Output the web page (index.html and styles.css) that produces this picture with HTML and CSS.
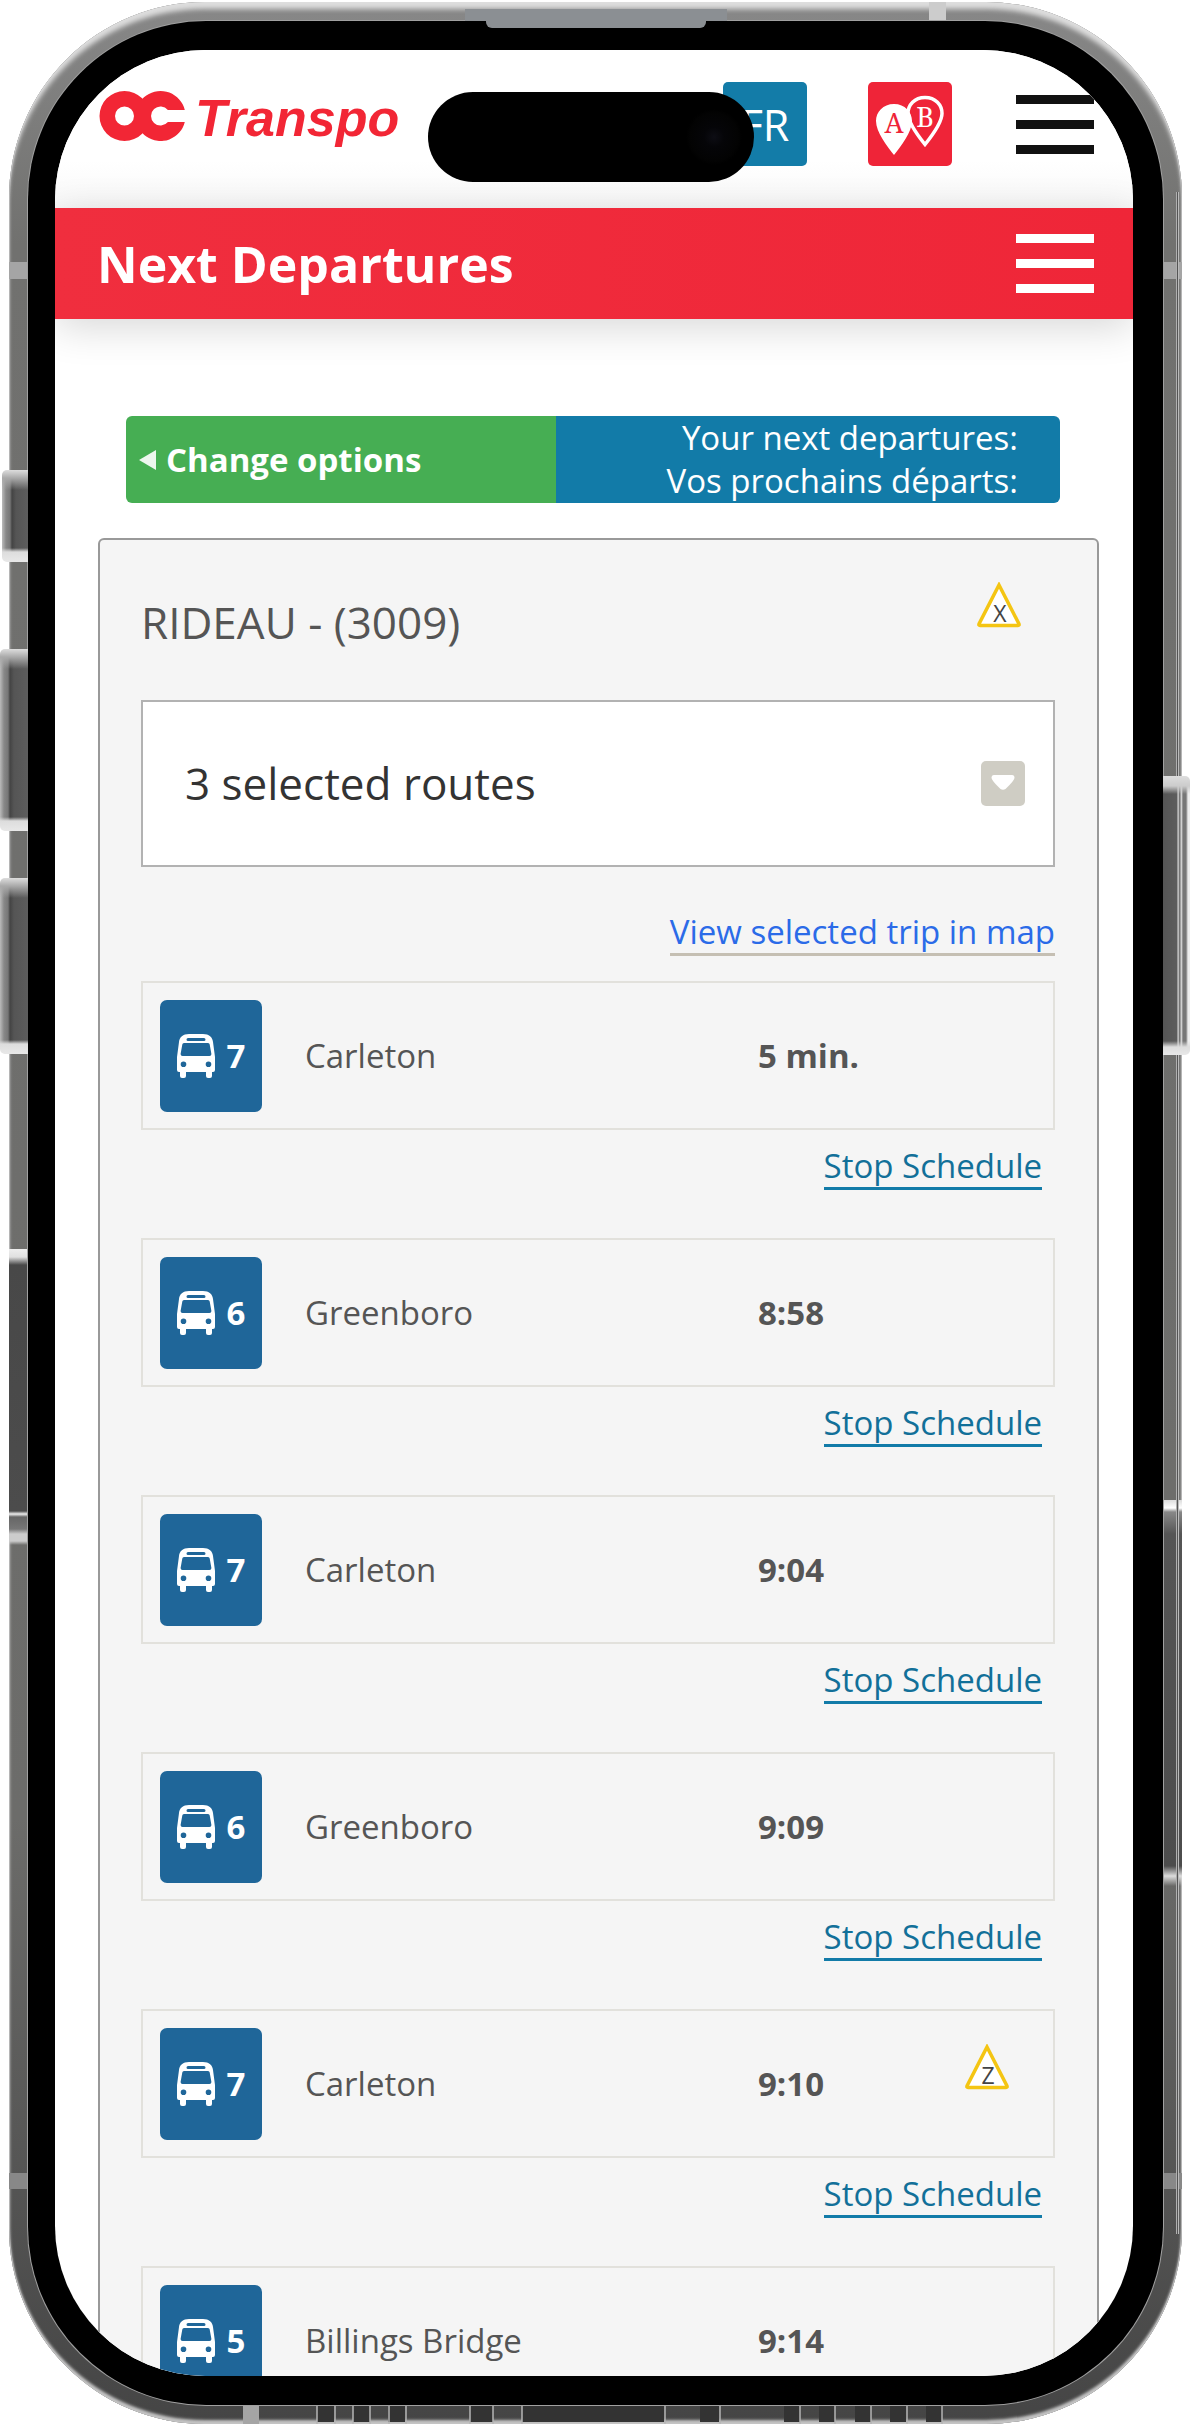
FILE: index.html
```html
<!DOCTYPE html>
<html lang="en">
<head>
<meta charset="utf-8">
<meta name="viewport" content="width=device-width, initial-scale=1">
<title>OC Transpo - Next Departures</title>
<link rel="stylesheet" href="styles.css">
</head>
<body>
<svg class="sprite" aria-hidden="true">
  <symbol id="bus" viewBox="0 0 38 44">
    <path fill="currentColor" fill-rule="evenodd" d="M12 0H26C32 0 35.500 3 36 8L38 23V36Q38 38 36 38H35V42Q35 44 33 44H31Q29 44 29 42V38H9V42Q9 44 7 44H5Q3 44 3 42V38H2Q0 38 0 36V23L2 8C2.500 3 6 0 12 0ZM11 4Q9.500 4 9.500 5.500T11 7H27Q28.500 7 28.500 5.500T27 4ZM7 9Q5.500 9 5.300 10.500L3.600 20Q3.500 22 5.500 22H32.500Q34.500 22 34.400 20L32.700 10.500Q32.500 9 31 9ZM6.500 27.500A2.800 2.800 0 1 0 6.500 33.100A2.800 2.800 0 1 0 6.500 27.500ZM31.500 27.500A2.800 2.800 0 1 0 31.500 33.100A2.800 2.800 0 1 0 31.500 27.500Z"/>
  </symbol>
</svg>
<div class="phone">
  <span class="key key-mute"></span>
  <span class="key key-up"></span>
  <span class="key key-down"></span>
  <span class="key key-power"></span>
  <div class="frame">
    <span class="reflection reflection-left"></span>
    <span class="reflection reflection-right"></span>
    <span class="antenna antenna-side"></span>
    <span class="antenna antenna-low"></span>
    <span class="antenna antenna-top"></span>
    <span class="antenna antenna-bottom"></span>
    <svg class="ports" viewBox="0 0 640 19" aria-hidden="true">
      <g fill="#333">
        <path d="M8 0h17v17H8zM44 0h17v17H44zM79 0h17v17H79zM161 0h23v17h-23zM213 0h142v17H213zM391 0h19v17h-19zM475 0h16v17h-16zM510 0h16v17h-16zM546 0h16v17h-16zM581 0h16v17h-16zM617 0h16v17h-16z"/>
      </g>
      <g stroke="#b5b5b5" stroke-width="1.500">
        <path d="M8 0v19M26 0v19M44 0v19M61 0v19M80 0v19M97 0v19M161 0v19M184 0v19M213 0v19M356 0v19M411 0v19M491 0v19M526 0v19M562 0v19M598 0v19M633 0v19"/>
      </g>
    </svg>
    <div class="bezel">
      <span class="speaker"></span>
      <div class="screen">
        <span class="island"></span>
        <header class="topbar">
          <a class="logo" href="#" aria-label="OC Transpo">
            <svg width="86" height="52" viewBox="0 0 86 52" aria-hidden="true">
              <g fill="#f22635" fill-rule="evenodd">
                <path d="M25.500 1A25 25 0 1 0 25.500 51A25 25 0 1 0 25.500 1ZM25.500 16.500A9.500 9.500 0 1 1 25.500 35.500A9.500 9.500 0 1 1 25.500 16.500Z"/>
                <path d="M85.800 20A25 25 0 1 0 85.800 32H68.900A9.500 9.500 0 1 1 68.900 20Z"/>
                <path d="M38 6L43.500 10L49 6V46L43.500 42L38 46Z"/>
              </g>
            </svg>
            <span>Transpo</span>
          </a>
          <nav class="tools" aria-label="Site tools">
            <button class="tool tool-lang" type="button">FR</button>
            <button class="tool tool-plan" type="button" aria-label="Trip planner">
              <svg width="84" height="84" viewBox="0 0 84 84">
                <path d="M57 15.500C67.500 15.500 74 23 74 31.500C74 41 63 55 57 62.500C51 55 40 41 40 31.500C40 23 46.500 15.500 57 15.500Z" fill="none" stroke="#fff" stroke-width="3.500"/>
                <path d="M26 22C37 22 44 30 44 39C44 50 33 64 26 73C19 64 8 50 8 39C8 30 15 22 26 22Z" fill="#fff"/>
                <text x="26" y="51" fill="#ef2438">A</text>
                <text x="57" y="45" fill="#fff">B</text>
              </svg>
            </button>
            <button class="menu" type="button" aria-label="Site menu"><i></i><i></i><i></i></button>
          </nav>
        </header>
        <div class="titlebar">
          <h1>Next Departures</h1>
          <button class="menu" type="button" aria-label="Page menu"><i></i><i></i><i></i></button>
        </div>
        <main>
          <div class="options">
            <a class="change" href="#"><svg width="20" height="22" viewBox="0 0 20 22" aria-hidden="true"><path d="M1 11L18 1V21Z" fill="#fff" fill-opacity=".9"/></svg>Change options</a>
            <p class="heading">Your next departures:<br><span lang="fr">Vos prochains départs:</span></p>
          </div>
          <section class="panel">
            <div class="stop">
              <h2>RIDEAU - (3009)</h2>
              <svg class="alert" width="46" height="46" viewBox="0 0 46 46"><path d="M23 3L43 42Q43.500 43.500 42 43.500H4Q2.500 43.500 3 42Z" fill="#fff" stroke="#f4c513" stroke-width="3.500"/><text x="24" y="40">X</text></svg>
            </div>
            <button class="routes" type="button">3 selected routes
              <svg width="44" height="45" viewBox="0 0 44 45" aria-hidden="true"><rect width="44" height="45" rx="5" fill="#cfcdc4"/><path d="M13 14H31Q33.500 14 33.500 17Q33 20 24.500 28Q22 29.500 19.500 28Q11 20 10.500 17Q10.500 14 13 14Z" fill="#fff"/></svg>
            </button>
            <p class="map"><a href="#">View selected trip in map</a></p>
            <ul class="trips">
              <li>
                <div class="trip"><span class="badge"><svg><use href="#bus"/></svg>7</span><span class="dest">Carleton</span><strong>5 min.</strong></div>
                <a class="schedule" href="#">Stop Schedule</a>
              </li>
              <li>
                <div class="trip"><span class="badge"><svg><use href="#bus"/></svg>6</span><span class="dest">Greenboro</span><strong>8:58</strong></div>
                <a class="schedule" href="#">Stop Schedule</a>
              </li>
              <li>
                <div class="trip"><span class="badge"><svg><use href="#bus"/></svg>7</span><span class="dest">Carleton</span><strong>9:04</strong></div>
                <a class="schedule" href="#">Stop Schedule</a>
              </li>
              <li>
                <div class="trip"><span class="badge"><svg><use href="#bus"/></svg>6</span><span class="dest">Greenboro</span><strong>9:09</strong></div>
                <a class="schedule" href="#">Stop Schedule</a>
              </li>
              <li>
                <div class="trip"><span class="badge"><svg><use href="#bus"/></svg>7</span><span class="dest">Carleton</span><strong>9:10</strong>
                  <svg class="alert" width="46" height="46" viewBox="0 0 46 46"><path d="M23 3L43 42Q43.500 43.500 42 43.500H4Q2.500 43.500 3 42Z" fill="#fff" stroke="#f4c513" stroke-width="3.500"/><text x="24" y="40">Z</text></svg></div>
                <a class="schedule" href="#">Stop Schedule</a>
              </li>
              <li>
                <div class="trip"><span class="badge"><svg><use href="#bus"/></svg>5</span><span class="dest">Billings Bridge</span><strong>9:14</strong></div>
              </li>
            </ul>
          </section>
        </main>
      </div>
    </div>
  </div>
</div>
</body>
</html>
```
FILE: styles.css
```css
* { box-sizing: border-box; }

body {
  margin: 0;
  background: #fff;
  color: #555;
  font-family: "Open Sans", "Noto Sans", sans-serif;
  font-size: 33px;
  line-height: 43px;
}

h1, h2, p, ul { margin: 0; padding: 0; }
button { font: inherit; border: 0; padding: 0; background: none; cursor: pointer; }
.sprite { display: none; }

/* phone body */
.phone {
  position: relative;
  height: 100vh;
  padding: 2px 9px;
}

.frame {
  position: relative;
  display: flex;
  height: 100%;
  padding: 19px;
  border-radius: 196px;
  overflow: hidden;
  background: linear-gradient(#888, #71716f 10%, #6c6c6a 75%, #454545);
  box-shadow: inset 0 9px 5px -2px #ddd, inset 0 -5px 3px -1px #c4c4c4, inset 0 0 0 1px #aaa, inset 0 0 3px 1px #999;
}

.bezel {
  position: relative;
  display: flex;
  flex: 1;
  min-width: 0;
  padding: 29px 30px 29px 27px;
  border-radius: 178px;
  background: #000;
  box-shadow: 0 0 0 1px #a0a0a0;
}

.screen {
  position: relative;
  flex: 1;
  min-width: 0;
  overflow: hidden;
  border-radius: 150px;
  background: #fff;
}

.key {
  position: absolute;
  z-index: 1;
  left: 0;
  width: 28px;
  border-radius: 5px 0 0 5px;
  background:
    linear-gradient(#ddd, #aaa 8px, transparent 20px, transparent calc(100% - 14px), #ddd calc(100% - 10px), #e8e8e8),
    linear-gradient(90deg, #bbb, #888 4px, #777 8px, #444 10px, #555 14px, #5d5d5d);
}
.key-mute { top: 470px; left: 2px; width: 26px; height: 92px; }
.key-up { top: 649px; height: 182px; }
.key-down { top: 878px; height: 176px; }
.key-power {
  top: 776px;
  left: auto;
  right: 1px;
  width: 27px;
  height: 279px;
  border-radius: 0 5px 5px 0;
  background:
    linear-gradient(#ddd, #ccc 10px, transparent 18px, transparent calc(100% - 14px), #ddd calc(100% - 8px), #e8e8e8),
    linear-gradient(90deg, #555, #5d5d5d 14px, #ddd 15px, #555 17px, #eee 18px, #777 20px, #777 23px, #eee 25px);
}

.reflection {
  position: absolute;
  width: 19px;
  left: 0;
  top: 1247px;
  height: 296px;
  background: linear-gradient(#eee, #e0e0e0 8px, #484848 16px, #4c4c4c 262px, #eee 265px, #666 268px, #777 280px, #ccc 285px, #ccc 292px, transparent);
}
.reflection-right {
  left: auto;
  right: 0;
  top: 1498px;
  height: 386px;
  background: linear-gradient(#ddd, #fff 8px, #888 12px, #555 34px, #4c4c4c 366px, #ddd 376px, transparent);
}
.frame::after {
  content: "";
  position: absolute;
  top: 190px;
  right: 3px;
  bottom: 190px;
  width: 3px;
  background: linear-gradient(90deg, #ddd, #555, #eee);
}

.antenna { position: absolute; background: #a5a5a5; }
.antenna-side { top: 260px; left: 0; right: 0; height: 17px; }
.antenna-low { bottom: 235px; left: 0; right: 0; height: 16px; background: #888; }
.antenna-top { top: 0; right: 236px; width: 17px; height: 19px; background: #ccc; }
.antenna-bottom { bottom: 0; left: 234px; width: 16px; height: 19px; }
.ports { position: absolute; bottom: 0; left: 300px; width: 640px; height: 19px; }

.speaker {
  position: absolute;
  top: -12px;
  left: 50%;
  width: 262px;
  height: 12px;
  margin-left: -131px;
  background: #8b8f93;
}
.speaker::after {
  content: "";
  position: absolute;
  top: 0;
  left: 21px;
  right: 21px;
  height: 19px;
  border-radius: 0 0 6px 6px;
  background: #8b8f93;
}

.island {
  position: absolute;
  z-index: 2;
  top: 42px;
  left: 50%;
  width: 326px;
  height: 90px;
  margin-left: -166px;
  border-radius: 45px;
  background: radial-gradient(circle at 286px 45px, #0d0d14 0, #050508 10px, #030303 24px, #000 28px);
}

/* site header */
.topbar {
  display: flex;
  justify-content: space-between;
  height: 158px;
  padding: 32px 39px 0 44px;
  background: linear-gradient(#fff 70%, #f8f8f8);
}
.logo {
  display: flex;
  gap: 10px;
  height: 64px;
  padding-top: 8px;
  color: #f22635;
  font: italic bold 52px/56px "Liberation Sans", Arial, sans-serif;
  text-decoration: none;
}
.tools { display: flex; gap: 61px; }
.tool { width: 84px; height: 84px; border-radius: 5px; color: #fff; }
.tool-lang { background: #137ca8; font-size: 43px; }
.tool-plan { background: #ef2438; }
.tool svg { display: block; }
.tool text { font: 27px "Noto Serif", "Liberation Serif", serif; text-anchor: middle; }

.menu {
  display: flex;
  flex-direction: column;
  gap: 16px;
  width: 78px;
  padding-top: 13px;
  color: #111;
}
.menu i { width: 78px; height: 9px; background: currentColor; }
.tools .menu { margin-left: 3px; }

.titlebar {
  display: flex;
  align-items: center;
  justify-content: space-between;
  height: 111px;
  padding: 0 39px 0 42px;
  background: linear-gradient(90deg, #f02e3e, #ef2638);
  box-shadow: 0 8px 40px rgba(0, 0, 0, .16);
}
.titlebar h1 { color: #fff; font-size: 50px; line-height: 60px; }
.titlebar .menu { padding: 0; color: #fff; }

/* departures */
main { padding: 97px 34px 0 43px; }

.options {
  display: flex;
  height: 87px;
  margin: 0 39px 0 28px;
  overflow: hidden;
  border-radius: 6px;
  color: #fff;
}
.change {
  display: flex;
  align-items: center;
  flex: 0 0 46%;
  gap: 8px;
  padding-left: 12px;
  background: #46ae53;
  color: #fff;
  font-weight: 700;
  text-decoration: none;
}
.heading { flex: 1; padding-right: 42px; background: #127ba8; text-align: right; }

.panel {
  margin-top: 35px;
  padding: 42px 42px 0 41px;
  border: 2px solid #999;
  border-radius: 6px;
  background: #f5f5f5;
}
.stop { display: flex; justify-content: space-between; padding-right: 33px; }
.stop h2 { margin-top: 10px; font-size: 44px; font-weight: 400; line-height: 60px; }
.alert text { fill: #444; font-size: 23px; text-anchor: middle; }

.routes {
  display: flex;
  align-items: center;
  justify-content: space-between;
  width: 100%;
  height: 167px;
  margin-top: 48px;
  padding: 0 28px 0 42px;
  border: 2px solid #b2b2b2;
  background: #fff;
  color: #333;
  font-size: 44px;
}
.map { margin-top: 43px; text-align: right; }
.map a { display: inline-block; border-bottom: 3px solid #c5bfb3; color: #2b6be8; text-decoration: none; line-height: 42px; }

.trips { margin-top: 25px; list-style: none; }
.trips li { height: 257px; }
.trip {
  display: flex;
  align-items: center;
  height: 149px;
  padding: 0 43px 0 17px;
  border: 2px solid #e2e1dc;
}
.badge {
  display: flex;
  align-items: center;
  justify-content: center;
  gap: 12px;
  width: 102px;
  height: 112px;
  border-radius: 7px;
  background: #1f6699;
  color: #fff;
  font-weight: 700;
}
.badge svg { width: 38px; height: 44px; }
.dest { flex: 0 0 453px; margin-left: 43px; }
.trip .alert { margin: 0 0 34px auto; }
.schedule {
  float: right;
  margin: 15px 13px 0 0;
  border-bottom: 3px solid #127ba8;
  color: #127099;
  line-height: 42px;
  text-decoration: none;
}
```
